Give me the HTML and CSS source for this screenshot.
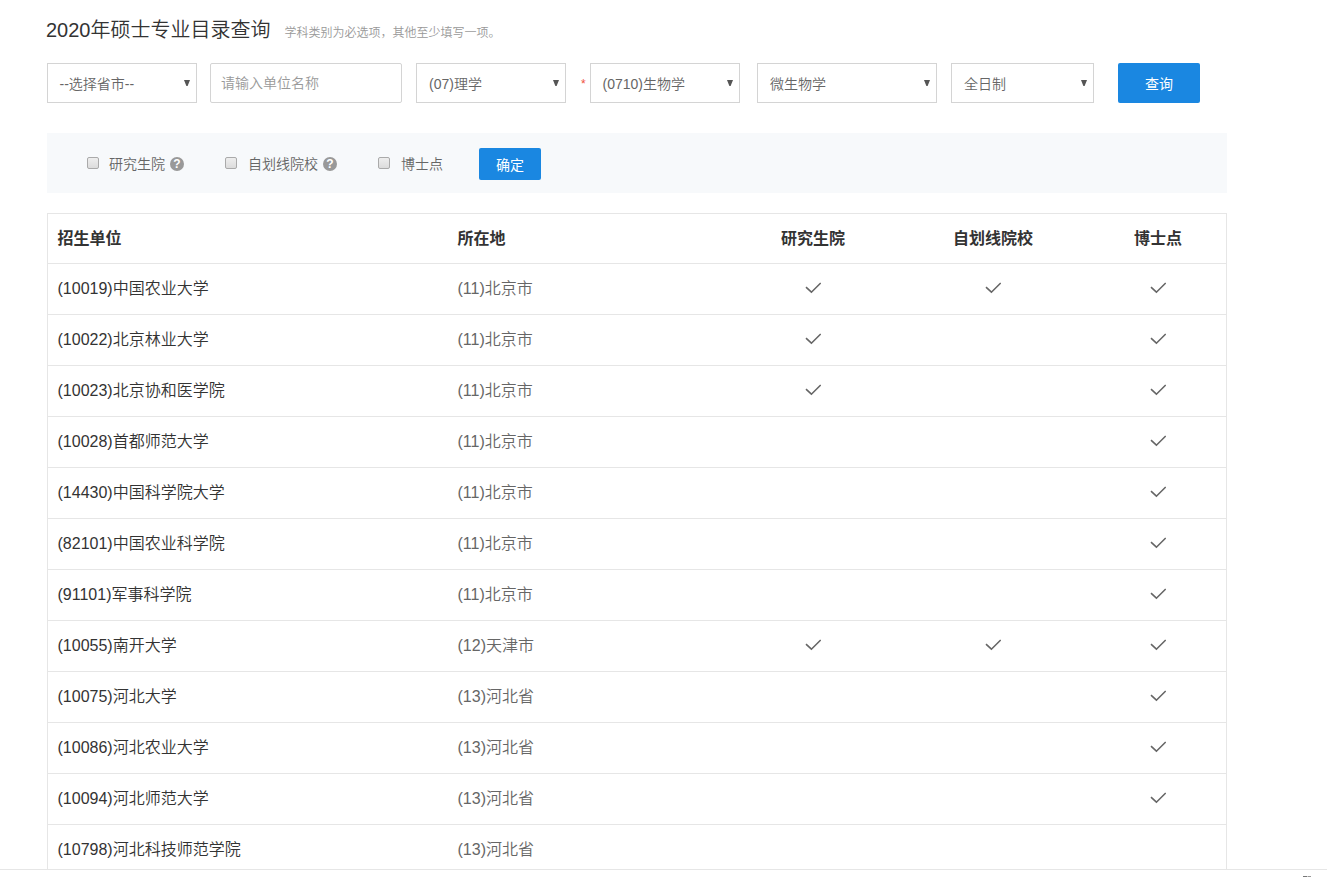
FILE: index.html
```
<!DOCTYPE html>
<html lang="zh-CN">
<head>
    <meta charset="UTF-8">
    <meta name="viewport" content="width=device-width, initial-scale=1.0">
    <title>硕士专业目录查询</title>
    <link rel="stylesheet" href="styles.css">
</head>
<body>
    <svg class="defs" width="0" height="0">
        <symbol id="check" viewBox="0 0 16 12">
            <path d="M1 5.2 L6.4 10.2 L15.7 1" fill="none" stroke="currentColor" stroke-width="1.6"/>
        </symbol>
    </svg>

    <div class="page">
        <div class="title">
            <h1>2020年硕士专业目录查询</h1>
            <span class="tip">学科类别为必选项，其他至少填写一项。</span>
        </div>

        <form class="search">
            <div class="select province"><span>--选择省市--</span><i class="arrow"></i></div>
            <input type="text" class="unit" placeholder="请输入单位名称">
            <div class="select category"><span>(07)理学</span><i class="arrow"></i></div>
            <span class="required">*</span>
            <div class="select subject"><span>(0710)生物学</span><i class="arrow"></i></div>
            <div class="select major"><span>微生物学</span><i class="arrow"></i></div>
            <div class="select mode"><span>全日制</span><i class="arrow"></i></div>
            <button type="button" class="btn btn-search">查询</button>
        </form>

        <div class="filter">
            <label class="f-school"><input type="checkbox"><span>研究生院</span><i class="help">?</i></label>
            <label class="f-line"><input type="checkbox"><span>自划线院校</span><i class="help">?</i></label>
            <label class="f-doctor"><input type="checkbox"><span>博士点</span></label>
            <button type="button" class="btn btn-ok">确定</button>
        </div>

        <table>
            <colgroup>
                <col class="c-unit">
                <col class="c-place">
                <col class="c-school">
                <col class="c-line">
                <col class="c-doctor">
            </colgroup>
            <thead>
                <tr>
                    <th>招生单位</th>
                    <th>所在地</th>
                    <th>研究生院</th>
                    <th>自划线院校</th>
                    <th>博士点</th>
                </tr>
            </thead>
            <tbody>
                <tr>
                    <td>(10019)中国农业大学</td>
                    <td>(11)北京市</td>
                    <td><svg class="check"><use href="#check"/></svg></td>
                    <td><svg class="check"><use href="#check"/></svg></td>
                    <td><svg class="check"><use href="#check"/></svg></td>
                </tr>
                <tr>
                    <td>(10022)北京林业大学</td>
                    <td>(11)北京市</td>
                    <td><svg class="check"><use href="#check"/></svg></td>
                    <td></td>
                    <td><svg class="check"><use href="#check"/></svg></td>
                </tr>
                <tr>
                    <td>(10023)北京协和医学院</td>
                    <td>(11)北京市</td>
                    <td><svg class="check"><use href="#check"/></svg></td>
                    <td></td>
                    <td><svg class="check"><use href="#check"/></svg></td>
                </tr>
                <tr>
                    <td>(10028)首都师范大学</td>
                    <td>(11)北京市</td>
                    <td></td>
                    <td></td>
                    <td><svg class="check"><use href="#check"/></svg></td>
                </tr>
                <tr>
                    <td>(14430)中国科学院大学</td>
                    <td>(11)北京市</td>
                    <td></td>
                    <td></td>
                    <td><svg class="check"><use href="#check"/></svg></td>
                </tr>
                <tr>
                    <td>(82101)中国农业科学院</td>
                    <td>(11)北京市</td>
                    <td></td>
                    <td></td>
                    <td><svg class="check"><use href="#check"/></svg></td>
                </tr>
                <tr>
                    <td>(91101)军事科学院</td>
                    <td>(11)北京市</td>
                    <td></td>
                    <td></td>
                    <td><svg class="check"><use href="#check"/></svg></td>
                </tr>
                <tr>
                    <td>(10055)南开大学</td>
                    <td>(12)天津市</td>
                    <td><svg class="check"><use href="#check"/></svg></td>
                    <td><svg class="check"><use href="#check"/></svg></td>
                    <td><svg class="check"><use href="#check"/></svg></td>
                </tr>
                <tr>
                    <td>(10075)河北大学</td>
                    <td>(13)河北省</td>
                    <td></td>
                    <td></td>
                    <td><svg class="check"><use href="#check"/></svg></td>
                </tr>
                <tr>
                    <td>(10086)河北农业大学</td>
                    <td>(13)河北省</td>
                    <td></td>
                    <td></td>
                    <td><svg class="check"><use href="#check"/></svg></td>
                </tr>
                <tr>
                    <td>(10094)河北师范大学</td>
                    <td>(13)河北省</td>
                    <td></td>
                    <td></td>
                    <td><svg class="check"><use href="#check"/></svg></td>
                </tr>
                <tr>
                    <td>(10798)河北科技师范学院</td>
                    <td>(13)河北省</td>
                    <td></td>
                    <td></td>
                    <td></td>
                </tr>
            </tbody>
        </table>
    </div>

    <div class="bottom-bar"><i class="mark"></i></div>
</body>
</html>
```

FILE: styles.css
```
* {
    box-sizing: border-box;
}
body {
    margin: 0;
    height: 877px;
    overflow: hidden;
    background-color: #fff;
    color: #666;
    font-family: "Liberation Sans", "Noto Sans CJK SC", sans-serif;
    font-size: 14px;
    font-weight: 350;
}
.defs {
    display: block;
}
.page {
    height: 869px;
    padding: 15px 0 0 47px;
    overflow: hidden;
}
.title {
    display: flex;
    align-items: baseline;
    height: 48px;
    margin-left: -1px;
    line-height: 30px;
}
h1 {
    margin: 0 14px 0 0;
    font-size: 20px;
    font-weight: inherit;
    color: #333;
}
.tip {
    font-size: 12px;
    color: #999;
}
.search {
    display: flex;
    height: 40px;
}
.select {
    display: flex;
    justify-content: space-between;
    width: 150px;
    padding: 0 6px 0 12px;
    border: 1px solid #d4d4d4;
    line-height: 40px;
}
.province,
.subject {
    padding-left: 11.5px;
}
.arrow {
    width: 6px;
    height: 6px;
    margin-top: 16px;
    background-color: #555;
    clip-path: polygon(0 0, 100% 0, 60% 100%, 40% 100%);
}
.unit {
    width: 192px;
    margin: 0 14px 0 13px;
    padding: 0 10px;
    border: 1px solid #d4d4d4;
    border-radius: 2px;
    font: inherit;
}
.unit::placeholder {
    color: #999;
}
.required {
    width: 24px;
    padding-left: 15px;
    line-height: 42px;
    font-size: 12px;
    color: #f05040;
}
.major {
    width: 180px;
    margin: 0 14px 0 17px;
}
.mode {
    width: 143px;
}
.btn {
    padding: 0;
    border: none;
    border-radius: 2px;
    background-color: #1a87e1;
    color: #fff;
    font: inherit;
    font-weight: 400;
    cursor: pointer;
}
.btn-search {
    width: 82px;
    margin-left: 24px;
}
.filter {
    display: flex;
    align-items: center;
    width: 1180px;
    height: 60px;
    margin: 30px 0 20px;
    padding: 2px 0 0 40px;
    background-color: #f7f9fb;
}
.filter label {
    display: flex;
    align-items: center;
    height: 20px;
}
.filter label span {
    margin-top: -2px;
}
.filter input {
    appearance: none;
    width: 12px;
    height: 12px;
    margin: 0 10px 2px 0;
    border: 1px solid #aaa;
    border-radius: 2px;
    background: linear-gradient(#eee, #dcdcdc);
}
.f-school {
    width: 138px;
}
.f-line {
    width: 153px;
}
.f-line input,
.f-doctor input {
    margin-right: 11px;
}
.f-doctor {
    width: 101px;
}
.help {
    width: 14px;
    height: 14px;
    margin-left: 5px;
    border-radius: 50%;
    background-color: #999;
    color: #fff;
    font-size: 12px;
    font-style: normal;
    font-weight: bold;
    line-height: 14px;
    text-align: center;
}
.btn-ok {
    width: 62px;
    height: 32px;
}
table {
    width: 1180px;
    table-layout: fixed;
    border: 1px solid #e6e6e6;
    border-collapse: separate;
    border-spacing: 0;
    font-size: 16px;
}
.c-unit {
    width: 400px;
}
.c-place {
    width: 282px;
}
.c-school {
    width: 166px;
}
.c-line {
    width: 194px;
}
.c-doctor {
    width: 136px;
}
th, td {
    height: 51px;
    padding: 0 10px;
    border-bottom: 1px solid #e6e6e6;
    line-height: 24px;
    text-align: center;
}
th {
    height: 50px;
    color: #333;
}
th:nth-child(-n+2),
td:nth-child(-n+2) {
    padding-left: 9.5px;
    text-align: left;
}
td:first-child {
    color: #333;
}
.check {
    display: block;
    width: 16px;
    height: 12px;
    margin: 0 auto 3px;
}
.bottom-bar {
    display: flex;
    justify-content: flex-end;
    align-items: flex-end;
    height: 8px;
    padding-right: 16px;
    border-top: 1px solid #e6e6e6;
}
.mark {
    width: 8px;
    height: 1px;
    background: linear-gradient(90deg, #777 50%, #ccc 50%, #ccc 65%, #999 65%);
}
```
